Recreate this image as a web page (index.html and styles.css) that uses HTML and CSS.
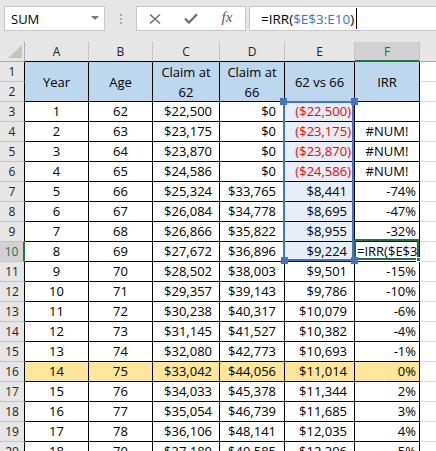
FILE: index.html
```html
<!DOCTYPE html>
<html>
<head>
<meta charset="utf-8">
<title>IRR sheet</title>
<link rel="stylesheet" href="styles.css">
</head>
<body>
<div class="fbar">
  <div class="namebox"><span>SUM</span><span class="dd"></span></div>
  <div class="grip"><i></i><i></i><i></i></div>
  <div class="btns">
    <svg width="12" height="10" viewBox="0 0 12 10"><path d="M1 0.5 L11 9.5 M11 0.5 L1 9.5" stroke="#707070" stroke-width="1.5" fill="none"/></svg>
    <svg width="14" height="11" viewBox="0 0 14 11"><path d="M1 5.5 L5 9.5 L13 1.2" stroke="#707070" stroke-width="2.3" fill="none"/></svg>
    <span class="fx">fx</span>
  </div>
  <div class="formula"><span>=IRR(</span><span class="ref">$E$3:E10</span><span>)</span><span class="caret"></span></div>
</div>
<div class="sheet">
  <div class="corner"><svg width="24" height="19" viewBox="0 0 24 19"><path d="M8 16 L22 16 L22 3 Z" fill="#c3c3c3"/></svg></div>
  <div class="ch">A</div><div class="ch">B</div><div class="ch">C</div><div class="ch">D</div><div class="ch">E</div><div class="ch sel">F</div><div class="ch chg"></div>

  <div class="rh">1</div>
  <div class="hd">Year</div><div class="hd">Age</div><div class="hd">Claim at<br>62</div><div class="hd">Claim at<br>66</div><div class="hd">62 vs 66</div><div class="hd">IRR</div><div class="g"></div>
  <div class="rh">2</div><div class="g"></div>

  <div class="rh">3</div><div class="c m">1</div><div class="c m">62</div><div class="c r">$22,500</div><div class="c r d">$0</div><div class="c r s neg">($22,500)</div><div class="c"></div><div class="g"></div>
  <div class="rh">4</div><div class="c m">2</div><div class="c m">63</div><div class="c r">$23,175</div><div class="c r d">$0</div><div class="c r s neg">($23,175)</div><div class="c m">#NUM!</div><div class="g"></div>
  <div class="rh">5</div><div class="c m">3</div><div class="c m">64</div><div class="c r">$23,870</div><div class="c r d">$0</div><div class="c r s neg">($23,870)</div><div class="c m">#NUM!</div><div class="g"></div>
  <div class="rh">6</div><div class="c m">4</div><div class="c m">65</div><div class="c r">$24,586</div><div class="c r d">$0</div><div class="c r s neg">($24,586)</div><div class="c m">#NUM!</div><div class="g"></div>
  <div class="rh">7</div><div class="c m">5</div><div class="c m">66</div><div class="c r">$25,324</div><div class="c r d">$33,765</div><div class="c r s">$8,441</div><div class="c p">-74%</div><div class="g"></div>
  <div class="rh">8</div><div class="c m">6</div><div class="c m">67</div><div class="c r">$26,084</div><div class="c r d">$34,778</div><div class="c r s">$8,695</div><div class="c p">-47%</div><div class="g"></div>
  <div class="rh">9</div><div class="c m">7</div><div class="c m">68</div><div class="c r">$26,866</div><div class="c r d">$35,822</div><div class="c r s">$8,955</div><div class="c p">-32%</div><div class="g"></div>
  <div class="rh rsel">10</div><div class="c m">8</div><div class="c m">69</div><div class="c r">$27,672</div><div class="c r d">$36,896</div><div class="c r s">$9,224</div><div class="c edit">=IRR($E$3</div><div class="g"></div>
  <div class="rh">11</div><div class="c m">9</div><div class="c m">70</div><div class="c r">$28,502</div><div class="c r d">$38,003</div><div class="c r">$9,501</div><div class="c p">-15%</div><div class="g"></div>
  <div class="rh">12</div><div class="c m">10</div><div class="c m">71</div><div class="c r">$29,357</div><div class="c r d">$39,143</div><div class="c r">$9,786</div><div class="c p">-10%</div><div class="g"></div>
  <div class="rh">13</div><div class="c m">11</div><div class="c m">72</div><div class="c r">$30,238</div><div class="c r d">$40,317</div><div class="c r">$10,079</div><div class="c p">-6%</div><div class="g"></div>
  <div class="rh">14</div><div class="c m">12</div><div class="c m">73</div><div class="c r">$31,145</div><div class="c r d">$41,527</div><div class="c r">$10,382</div><div class="c p">-4%</div><div class="g"></div>
  <div class="rh">15</div><div class="c m">13</div><div class="c m">74</div><div class="c r">$32,080</div><div class="c r d">$42,773</div><div class="c r">$10,693</div><div class="c p">-1%</div><div class="g"></div>
  <div class="rh">16</div><div class="c m y">14</div><div class="c m y">75</div><div class="c r y">$33,042</div><div class="c r d y">$44,056</div><div class="c r y">$11,014</div><div class="c p y">0%</div><div class="g"></div>
  <div class="rh">17</div><div class="c m">15</div><div class="c m">76</div><div class="c r">$34,033</div><div class="c r d">$45,378</div><div class="c r">$11,344</div><div class="c p">2%</div><div class="g"></div>
  <div class="rh">18</div><div class="c m">16</div><div class="c m">77</div><div class="c r">$35,054</div><div class="c r d">$46,739</div><div class="c r">$11,685</div><div class="c p">3%</div><div class="g"></div>
  <div class="rh">19</div><div class="c m">17</div><div class="c m">78</div><div class="c r">$36,106</div><div class="c r d">$48,141</div><div class="c r">$12,035</div><div class="c p">4%</div><div class="g"></div>
  <div class="rh">20</div><div class="c m">18</div><div class="c m">79</div><div class="c r">$37,189</div><div class="c r d">$49,585</div><div class="c r">$12,396</div><div class="c p">5%</div><div class="g"></div>

  <div class="selbox"></div>
  <div class="activebox"></div>
  <span class="ghandle"></span>
  <span class="handle h-tl"></span>
  <span class="handle h-tr"></span>
  <span class="handle h-bl"></span>
  <span class="handle h-br"></span>
</div>
</body>
</html>
```
FILE: styles.css
```css
* { box-sizing: border-box; }
html, body { margin: 0; padding: 0; }
body {
  width: 436px;
  height: 451px;
  overflow: hidden;
  background: #fff;
  font-family: "Open Sans", "Liberation Sans", sans-serif;
  font-size: 13px;
  color: #000;
}

/* formula bar */
.fbar {
  display: flex;
  align-items: flex-start;
  height: 42px;
  padding: 6px 0 0 4px;
  background: #e6e6e6;
}
.namebox {
  width: 101px;
  height: 25px;
  background: #fff;
  border: 1px solid #c6c6c6;
  display: flex;
  align-items: center;
  justify-content: space-between;
  padding: 0 5px 0 6px;
  font-size: 13px;
}
.dd {
  width: 0;
  height: 0;
  border-left: 4px solid transparent;
  border-right: 4px solid transparent;
  border-top: 4px solid #7a7a7a;
  margin-top: -2px;
}
.grip {
  display: flex;
  flex-direction: column;
  gap: 2px;
  margin: 8px 0 0 15px;
}
.grip i {
  display: block;
  width: 2px;
  height: 2px;
  background: #a8a8a8;
}
.btns {
  margin-left: 14px;
  height: 25px;
  display: grid;
  grid-template-columns: 36px 36px 36px;
  align-items: center;
  justify-items: center;
  background: #fff;
  border: 1px solid #c6c6c6;
}
.btns svg { display: block; }
.fx {
  font-family: "Liberation Serif", serif;
  font-style: italic;
  font-size: 15px;
  color: #5a5a5a;
  line-height: 1;
  margin-top: -2px;
}
.formula {
  flex: 1;
  margin-left: 3px;
  height: 25px;
  background: #fff;
  border: 1px solid #c6c6c6;
  border-right: none;
  display: flex;
  align-items: center;
  padding-left: 11px;
  font-size: 13.5px;
  white-space: nowrap;
}
.ref { color: #4472c4; }
.caret {
  width: 1px;
  height: 21px;
  background: #000;
  margin-left: 2px;
}

/* sheet grid */
.sheet {
  position: relative;
  height: 409px;
  overflow: hidden;
  display: grid;
  grid-template-columns: 25px 64px 64px 67px 65px 70px 65px 1fr;
  grid-auto-rows: 20px;
}
.sheet > div {
  line-height: 19px;
  white-space: nowrap;
  overflow: hidden;
}
.corner {
  background: #e6e6e6;
  border-right: 1px solid #ababab;
  border-bottom: 1px solid #ababab;
}
.corner svg { display: block; }
.ch {
  background: #e6e6e6;
  border-right: 1px solid #c3c3c3;
  border-bottom: 1px solid #000;
  text-align: center;
  font-size: 12px;
  color: #222;
}
.ch.sel {
  background: #d2d2d2;
  color: #217346;
  border-bottom: 2px solid #217346;
}
.ch.chg { border-bottom-color: #ababab; border-right: none; }
.rh {
  background: #e6e6e6;
  border-right: 1px solid #000;
  border-bottom: 1px solid #c3c3c3;
  text-align: center;
  font-size: 12px;
  color: #222;
}
.rh.rsel {
  background: #d2d2d2;
  color: #217346;
  border-right: 2px solid #217346;
}
.hd {
  grid-row: span 2;
  background: #bdd7ee;
  border-right: 1px solid #000;
  border-bottom: 1px solid #000;
  display: flex;
  align-items: center;
  justify-content: center;
  text-align: center;
  line-height: 20px !important;
}
.c {
  border-right: 1px solid #000;
  border-bottom: 1px solid #000;
  padding: 0 3px;
}
.m { text-align: center; }
.r { text-align: right; padding-right: 7px; }
.r.d { padding-right: 8px; }
.p { text-align: right; padding-right: 3px; }
.neg { color: #ff0000; padding-right: 3px; }
.s { background: #e8eef8; }
.y { background: #ffe699; }
.edit { text-align: left; padding-left: 2px; }
.g { border-bottom: 1px solid #d9d9d9; }

/* selection overlays */
.selbox {
  position: absolute;
  left: 283px;
  top: 59px;
  width: 71px;
  height: 160px;
  border: 2px solid #4472c4;
}
.activebox {
  position: absolute;
  left: 354px;
  top: 197px;
  width: 65px;
  height: 21px;
  border: 2px solid #217346;
}
.ghandle {
  position: absolute;
  left: 416px;
  top: 215px;
  width: 5px;
  height: 5px;
  background: #217346;
  border: 1px solid #fff;
}
.handle {
  position: absolute;
  width: 7px;
  height: 7px;
  background: #4472c4;
}
.h-tl { left: 280px; top: 56px; }
.h-tr { left: 351px; top: 56px; }
.h-bl { left: 281px; top: 215px; }
.h-br { left: 351px; top: 215px; }
```
